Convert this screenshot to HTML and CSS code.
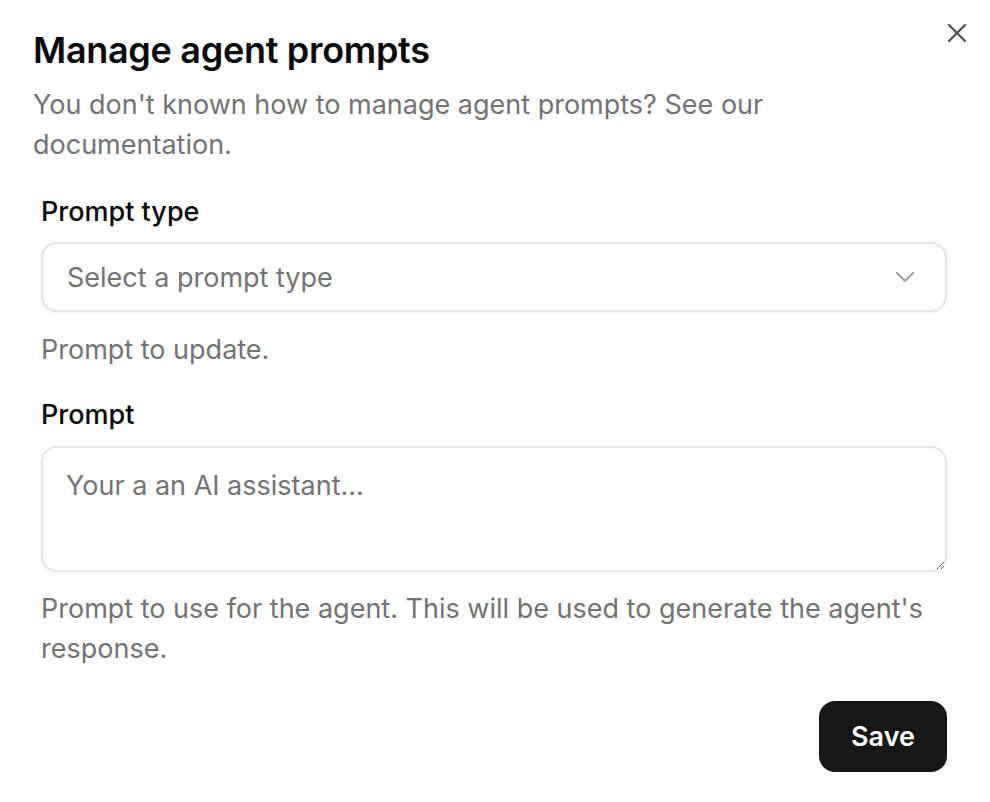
FILE: index.html
```html
<!DOCTYPE html>
<html lang="en">
<head>
<meta charset="utf-8">
<title>Manage agent prompts</title>
<link rel="stylesheet" href="styles.css">
</head>
<body>
<div class="dialog">
  <button class="close" aria-label="Close">
    <svg width="20" height="20" viewBox="0 0 20 20"><path d="M2 2 L18 18 M18 2 L2 18" stroke="#555" stroke-width="2.4" stroke-linecap="round" fill="none"/></svg>
  </button>
  <header class="head">
    <h1 class="title">Manage agent prompts</h1>
    <p class="desc">You don't known how to manage agent prompts? See our documentation.</p>
  </header>
  <form class="form">
    <div class="field field-first">
      <label class="label">Prompt type</label>
      <div class="select">
        <span class="placeholder">Select a prompt type</span>
        <svg class="chev" width="20" height="12" viewBox="0 0 20 12"><path d="M2 2 L10 10 L18 2" stroke="#a3a3a3" stroke-width="2.4" stroke-linecap="round" stroke-linejoin="round" fill="none"/></svg>
      </div>
      <p class="help">Prompt to update.</p>
    </div>
    <div class="field">
      <label class="label">Prompt</label>
      <textarea class="textarea" placeholder="Your a an AI assistant..."></textarea>
      <p class="help">Prompt to use for the agent. This will be used to generate the agent's response.</p>
    </div>
    <div class="actions">
      <button type="button" class="save">Save</button>
    </div>
  </form>
</div>
</body>
</html>
```
FILE: styles.css
```css
html, body {
  margin: 0;
  padding: 0;
  background: #ffffff;
}
body {
  font-family: Inter, "Liberation Sans", sans-serif;
  color: #0a0a0a;
}
.dialog {
  position: relative;
  width: 990px;
  height: 802px;
  box-sizing: border-box;
  padding-top: 30px;
}
.close {
  position: absolute;
  top: 23px;
  right: 23px;
  width: 20px;
  height: 20px;
  padding: 0;
  border: 0;
  background: none;
  display: flex;
}
.head {
  padding: 0 110px 0 33px;
}
.title {
  margin: 0;
  font-size: 36px;
  line-height: 40px;
  font-weight: 600;
  letter-spacing: -0.3px;
}
.desc {
  margin: 15px 0 0;
  font-size: 27px;
  line-height: 40px;
  color: #737373;
}
.form {
  margin: 0 43px 0 41px;
  display: flex;
  flex-direction: column;
}
.field {
  display: flex;
  flex-direction: column;
  margin-top: 25px;
}
.field-first {
  margin-top: 27px;
}
.label {
  font-size: 27px;
  line-height: 40px;
  font-weight: 500;
}
.select {
  margin-top: 10px;
  height: 70px;
  box-sizing: border-box;
  border: 2px solid #e5e5e5;
  border-radius: 16px;
  box-shadow: 0 2px 3px rgba(0,0,0,0.04);
  display: flex;
  align-items: center;
  justify-content: space-between;
  padding: 0 30px 0 24px;
}
.placeholder {
  font-size: 27px;
  color: #737373;
}
.help {
  margin: 18px 0 0;
  font-size: 27px;
  line-height: 40px;
  color: #737373;
}
.field + .field .help {
  margin-top: 17px;
}
.textarea {
  margin-top: 11px;
  height: 126px;
  box-sizing: border-box;
  border: 2px solid #e5e5e5;
  border-radius: 16px;
  box-shadow: 0 2px 3px rgba(0,0,0,0.04);
  padding: 18px 23px;
  font-family: Inter, "Liberation Sans", sans-serif;
  font-size: 27px;
  line-height: 40px;
  color: #0a0a0a;
  resize: vertical;
  outline: none;
}
.textarea::placeholder {
  color: #737373;
}
.actions {
  display: flex;
  justify-content: flex-end;
  margin-top: 32px;
}
.save {
  width: 128px;
  height: 71px;
  border: 0;
  border-radius: 16px;
  background: #171717;
  color: #ffffff;
  font-family: Inter, "Liberation Sans", sans-serif;
  font-size: 27px;
  font-weight: 600;
}
```
